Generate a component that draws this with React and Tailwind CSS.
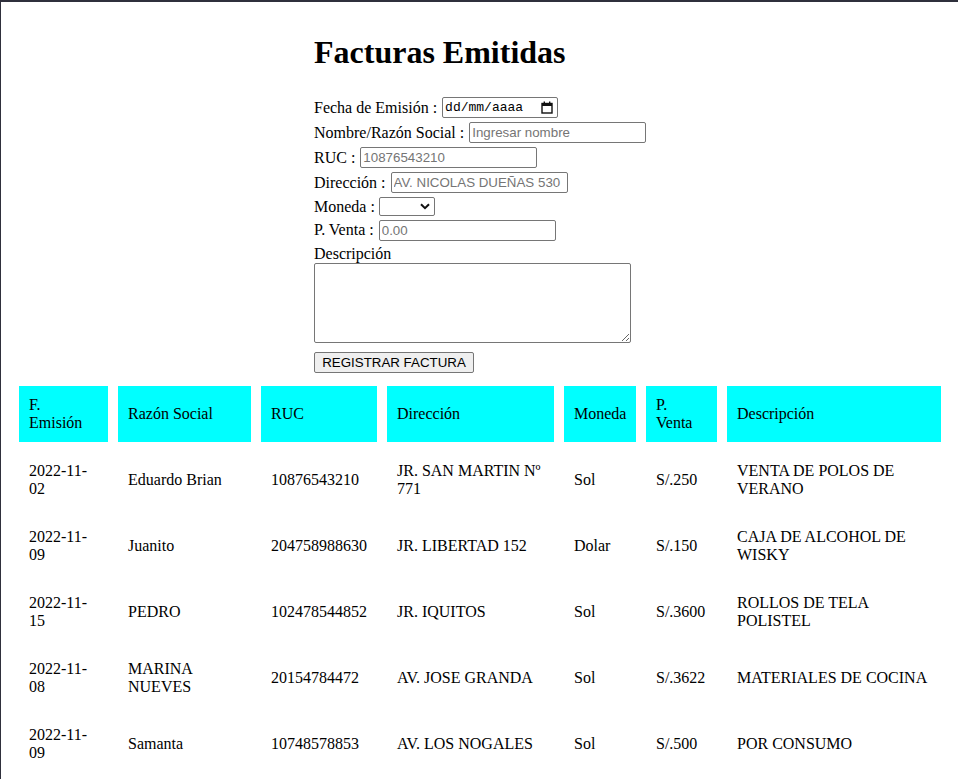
import React from 'react';

const facturas = [
    ['2022-11-02', 'Eduardo Brian', '10876543210', 'JR. SAN MARTIN Nº 771', 'Sol', 'S/.250', 'VENTA DE POLOS DE VERANO'],
    ['2022-11-09', 'Juanito', '204758988630', 'JR. LIBERTAD 152', 'Dolar', 'S/.150', 'CAJA DE ALCOHOL DE WISKY'],
    ['2022-11-15', 'PEDRO', '102478544852', 'JR. IQUITOS', 'Sol', 'S/.3600', 'ROLLOS DE TELA POLISTEL'],
    ['2022-11-08', 'MARINA NUEVES', '20154784472', 'AV. JOSE GRANDA', 'Sol', 'S/.3622', 'MATERIALES DE COCINA'],
    ['2022-11-09', 'Samanta', '10748578853', 'AV. LOS NOGALES', 'Sol', 'S/.500', 'POR CONSUMO'],
];

const columns = [
    { label: 'F. Emisión', width: 'w-[89px]' },
    { label: 'Razón Social', width: 'w-[133px]' },
    { label: 'RUC', width: 'w-[116px]' },
    { label: 'Dirección', width: 'w-[167px]' },
    { label: 'Moneda', width: 'w-[72px]' },
    { label: 'P. Venta', width: 'w-[71px]' },
    { label: 'Descripción', width: 'w-[214px]' },
];

const inputCls =
    "ml-px h-[21px] w-[177px] border border-[#767676] rounded-[2px] px-[2px] font-['Liberation_Sans',sans-serif] text-[13.33px] text-black placeholder:text-[#757575] outline-none bg-white";

const Row = ({ label, className = 'h-[25px]', children }) => (
    <div className={`flex items-center ${className}`}>
        <span className="whitespace-pre">{label} : </span>
        {children}
    </div>
);

const App = () => {
    return (
        <div className="min-h-screen border-t-2 border-l border-[#2f303c] bg-white font-['Liberation_Serif',serif] text-[16px] text-black">
            <div className="px-2 pt-[32px]">
                {/* Formulario */}
                <div className="ml-[305px]">
                    <h1 className="text-[32px] leading-[37px] font-bold mb-[24px]">Facturas Emitidas</h1>

                    <Row label="Fecha de Emisión">
                        <div className="ml-px flex items-center h-[21px] w-[116px] border border-[#767676] rounded-[2px] pl-[2px] pr-[4px] bg-white">
                            <span className="font-['Liberation_Mono',monospace] text-[13px]">dd/mm/aaaa</span>
                            <svg className="ml-auto" width="12" height="13" viewBox="0 0 12 13">
                                <rect x="1" y="2.5" width="10" height="9.5" fill="none" stroke="#111" strokeWidth="1.4" />
                                <rect x="1" y="2.5" width="10" height="2.5" fill="#111" />
                                <rect x="2.6" y="0.5" width="1.4" height="2.5" fill="#111" />
                                <rect x="8" y="0.5" width="1.4" height="2.5" fill="#111" />
                            </svg>
                        </div>
                    </Row>
                    <Row label="Nombre/Razón Social">
                        <input className={inputCls} placeholder="Ingresar nombre" />
                    </Row>
                    <Row label="RUC">
                        <input className={inputCls} placeholder="10876543210" />
                    </Row>
                    <Row label="Dirección">
                        <input className={inputCls} placeholder="AV. NICOLAS DUEÑAS 530" />
                    </Row>
                    <Row label="Moneda" className="h-[23px]">
                        <div className="flex items-center justify-end h-[19px] w-[56px] border border-[#767676] rounded-[2px] pr-[4px] bg-white">
                            <svg width="10" height="7" viewBox="0 0 10 7">
                                <path d="M1 1.2 L5 5.2 L9 1.2" fill="none" stroke="#111" strokeWidth="2" />
                            </svg>
                        </div>
                    </Row>
                    <Row label="P. Venta" className="h-[24px]">
                        <input className={inputCls} placeholder="0.00" />
                    </Row>
                    <div className="mt-[3px] h-[18px] leading-[18px]">Descripción</div>
                    <textarea className="block h-[80px] w-[317px] border border-[#767676] rounded-[2px] bg-white outline-none" />
                    <button className="mt-[9px] h-[21px] w-[160px] border border-[#767676] rounded-[2px] bg-[#efefef] font-['Liberation_Sans',sans-serif] text-[13.33px] text-black">
                        REGISTRAR FACTURA
                    </button>
                </div>

                {/* Tabla de facturas */}
                <table className="mt-[2px] w-[942px] table-fixed border-separate border-spacing-[10px] leading-[18px]">
                    <thead>
                        <tr>
                            {columns.map((col, i) => (
                                <th key={col.label} className={`${col.width} h-[56px] bg-[#00ffff] p-[10px] text-left font-normal align-middle`}>
                                    <span className={i === 0 ? 'inline-block max-w-[64px]' : ''}>{col.label}</span>
                                </th>
                            ))}
                        </tr>
                    </thead>
                    <tbody>
                        {facturas.map((fila, i) => (
                            <tr key={i}>
                                {fila.map((valor, j) => (
                                    <td key={j} className="h-[56px] p-[10px] align-middle">
                                        {valor}
                                    </td>
                                ))}
                            </tr>
                        ))}
                    </tbody>
                </table>
            </div>
        </div>
    );
};

export default App;
